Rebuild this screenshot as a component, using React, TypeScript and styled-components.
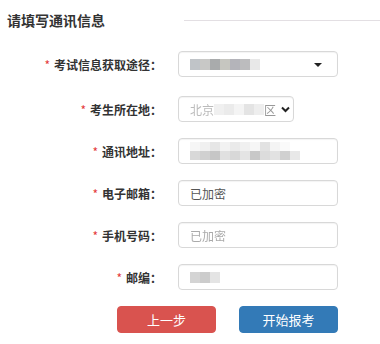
import React from 'react';
import styled, { createGlobalStyle } from 'styled-components';

const GlobalStyle = createGlobalStyle`
  body {
    margin: 0;
    background: #fff;
    font-family: "Noto Sans CJK SC", "Noto Sans", sans-serif;
  }
`
const Page = styled.div`
  width: 380px;
  height: 344px;
  overflow: hidden;
`
const Header = styled.div`
  display: flex;
  align-items: center;
  height: 40px;
  padding-left: 7px;
`
const Title = styled.h2`
  margin: 0;
  font-size: 14px;
  font-weight: bold;
  color: #333;
`
const Rule = styled.div`
  margin-left: auto;
  width: 196px;
  height: 1px;
  background: #e3dfe3;
`
const Form = styled.div`
  display: flex;
  flex-direction: column;
  gap: 16px;
  padding-top: 11px;
`
const Row = styled.div<{ $extra?: number }>`
  display: grid;
  grid-template-columns: 162px auto;
  column-gap: 16px;
  align-items: center;
  margin-top: ${p => p.$extra || 0}px;
`
const Label = styled.label`
  text-align: right;
  font-size: 12px;
  font-weight: bold;
  color: #333;
  white-space: nowrap;
`
const Star = styled.span`
  color: #e4393c;
  font-weight: normal;
  margin-right: 4px;
`
const Control = styled.div<{ $width: number }>`
  position: relative;
  display: flex;
  align-items: center;
  box-sizing: border-box;
  width: ${p => p.$width}px;
  height: 26px;
  padding: 0 11px;
  border: 1px solid #d8d8d8;
  border-radius: 4px;
  box-shadow: inset 0 1px 1px rgba(0, 0, 0, .05);
  font-size: 12px;
  color: #555;
`
const Caret = styled.span`
  position: absolute;
  right: 15px;
  top: 11px;
  width: 0;
  height: 0;
  border-left: 4px solid transparent;
  border-right: 4px solid transparent;
  border-top: 4px solid #222;
`
const Chevron = styled.svg`
  position: absolute;
  right: 3px;
  top: 9px;
`
const Cells = styled.div`
  display: flex;
  flex-direction: column;
`
const CellRow = styled.div`
  display: flex;
`
const Cell = styled.span<{ $c: string; $w?: number; $h?: number }>`
  display: block;
  width: ${p => p.$w || 10}px;
  height: ${p => p.$h || 11}px;
  background: ${p => p.$c};
`
const Faint = styled.span<{ $c?: string }>`
  font-size: 12px;
  color: ${p => p.$c || '#bbb'};
  filter: blur(0.5px);
  white-space: nowrap;
`
const Buttons = styled.div`
  display: flex;
  gap: 23px;
  padding-left: 117px;
`
const Button = styled.button<{ $bg: string }>`
  width: 99px;
  height: 27px;
  border: 1px solid ${p => p.$bg};
  border-radius: 4px;
  background: ${p => p.$bg};
  color: #fff;
  font-family: inherit;
  font-size: 13px;
  padding: 0;
`

function Mosaic({ rows, h }: { rows: string[][]; h?: number }) {
  return (
    <Cells>
      {rows.map((r, i) => (
        <CellRow key={i}>
          {r.map((c, j) => <Cell key={j} $c={c} $h={h} />)}
        </CellRow>
      ))}
    </Cells>
  );
}

function Field({ label, children }: { label: string; children: React.ReactNode }) {
  return (
    <>
      <Label><Star>*</Star>{label}</Label>
      {children}
    </>
  );
}

export default function App() {
  return (
    <Page>
      <GlobalStyle />
      <Header>
        <Title>请填写通讯信息</Title>
        <Rule />
      </Header>
      <Form>
        <Row>
          <Field label="考试信息获取途径：">
            <Control $width={160}>
              <Mosaic rows={[['#c0c4c8', '#c8c8c6', '#a9abac', '#c6c6c0', '#b4b4ba', '#bcbcbe', '#e8e8e8']]} />
              <Caret />
            </Control>
          </Field>
        </Row>
        <Row $extra={3}>
          <Field label="考生所在地：">
            <Control $width={116}>
              <Faint>北京</Faint>
              <Mosaic rows={[['#f0f0f0', '#ebebeb', '#f4f4f4', '#e4e4e4', '#eeeeee']]} />
              <Faint $c="#999">区</Faint>
              <Chevron width="9" height="7" viewBox="0 0 9 7">
                <path d="M1 1.5 L4.5 5 L8 1.5" fill="none" stroke="#222" strokeWidth="2" />
              </Chevron>
            </Control>
          </Field>
        </Row>
        <Row>
          <Field label="通讯地址：">
            <Control $width={160}>
              <Mosaic h={9} rows={[
                ['#f6f6f6', '#f0f0f0', '#e6e6e6', '#f2f2f2', '#eaeaea', '#f0f0f0', '#f6f6f6', '#e2e2e2', '#f4f4f4', '#fafafa', '#ffffff'],
                ['#d8d8d8', '#d0d0d0', '#c6c6c6', '#e0e0e0', '#d8d8d8', '#e4e4e4', '#c8c8c8', '#dcdcdc', '#e2e2e2', '#d0d0d0', '#e8e8e8'],
              ]} />
            </Control>
          </Field>
        </Row>
        <Row>
          <Field label="电子邮箱：">
            <Control $width={160}>已加密</Control>
          </Field>
        </Row>
        <Row>
          <Field label="手机号码：">
            <Control $width={160}>
              <Faint $c="#aaa">已加密</Faint>
            </Control>
          </Field>
        </Row>
        <Row>
          <Field label="邮编：">
            <Control $width={160}>
              <Mosaic rows={[['#d4d4d4', '#cccccc', '#e4e4e4']]} />
            </Control>
          </Field>
        </Row>
        <Buttons>
          <Button $bg="#d9534f">上一步</Button>
          <Button $bg="#337ab7">开始报考</Button>
        </Buttons>
      </Form>
    </Page>
  );
}
